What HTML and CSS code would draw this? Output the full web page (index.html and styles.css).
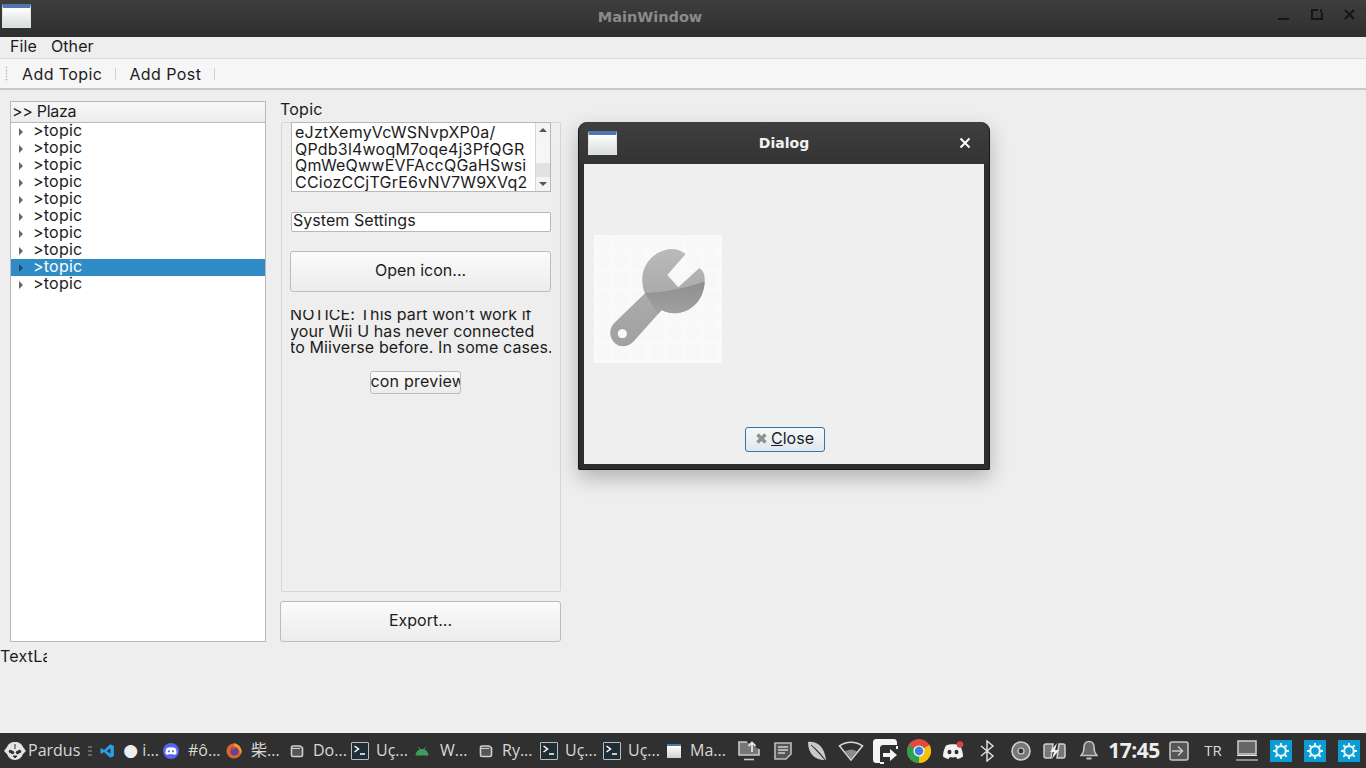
FILE: index.html
```html
<!DOCTYPE html>
<html>

<head>
  <title>MainWindow</title>
  <link rel="stylesheet" href="styles.css">
</head>

<body>
  <div class="main-window">
    <div class="titlebar">
      <span class="app-icon"></span>
      <span class="titlebar-text">MainWindow</span>
      <div class="window-buttons">
        <svg width="16" height="16" viewBox="0 0 16 16"><path d="M2 12h11" stroke="#161616" stroke-width="2"/></svg>
        <svg width="16" height="16" viewBox="0 0 16 16"><path d="M9 3H3v9h10V6M12 2.5v3" fill="none" stroke="#161616" stroke-width="2"/></svg>
        <svg width="16" height="16" viewBox="0 0 16 16"><path d="M3 3l9 9M12 3l-9 9" stroke="#161616" stroke-width="2.2"/></svg>
      </div>
    </div>

    <div class="menubar">
      <span>File</span>
      <span>Other</span>
    </div>

    <div class="toolbar">
      <span class="grip"></span>
      <span class="tool">Add Topic</span>
      <span class="tool-sep"></span>
      <span class="tool">Add Post</span>
      <span class="tool-sep"></span>
    </div>

    <div class="content">
      <div class="columns">
        <div class="tree">
          <div class="tree-header">&gt;&gt; Plaza</div>
          <div class="tree-body">
            <div class="tree-row"><span class="arrow"></span>&gt;topic</div>
            <div class="tree-row"><span class="arrow"></span>&gt;topic</div>
            <div class="tree-row"><span class="arrow"></span>&gt;topic</div>
            <div class="tree-row"><span class="arrow"></span>&gt;topic</div>
            <div class="tree-row"><span class="arrow"></span>&gt;topic</div>
            <div class="tree-row"><span class="arrow"></span>&gt;topic</div>
            <div class="tree-row"><span class="arrow"></span>&gt;topic</div>
            <div class="tree-row"><span class="arrow"></span>&gt;topic</div>
            <div class="tree-row selected"><span class="arrow"></span>&gt;topic</div>
            <div class="tree-row"><span class="arrow"></span>&gt;topic</div>
          </div>
        </div>

        <div class="topic-column">
          <div class="topic-label">Topic</div>
          <div class="group">
            <div class="text-area">
              <div class="text-lines">
                <div>eJztXemyVcWSNvpXP0a/</div>
                <div>QPdb3l4woqM7oqe4j3PfQGR</div>
                <div>QmWeQwwEVFAccQGaHSwsi</div>
                <div>CCiozCCjTGrE6vNV7W9XVq2</div>
              </div>
              <div class="scrollbar">
                <span class="scroll-btn"><span class="tri-up"></span></span>
                <span class="scroll-track"><span class="scroll-thumb"></span></span>
                <span class="scroll-btn"><span class="tri-down"></span></span>
              </div>
            </div>
            <div class="line-edit">System Settings</div>
            <div class="btn open-btn">Open icon...</div>
            <div class="notice">
              <p>NOTICE: This part won't work if your Wii U has never connected to Miiverse before. In some cases.</p>
            </div>
            <div class="btn preview-btn"><span>Icon preview</span></div>
          </div>
          <div class="btn export-btn">Export...</div>
        </div>
      </div>
      <div class="text-label">TextLabel</div>
    </div>
  </div>

  <!-- dialog window floating over the main one -->
  <div class="dialog">
    <div class="dialog-title">
      <span class="app-icon"></span>
      <span class="dialog-title-text">Dialog</span>
      <svg class="dialog-close" width="14" height="14" viewBox="0 0 14 14"><path d="M2.5 2.5l9 9M11.5 2.5l-9 9" stroke="#fff" stroke-width="2"/></svg>
    </div>
    <div class="dialog-body">
      <div class="preview-area">
        <svg class="wrench" width="128" height="128" viewBox="12 15 384 384">
          <defs>
            <pattern id="dots" width="54" height="54" patternUnits="userSpaceOnUse" x="12" y="15">
              <rect width="54" height="54" fill="#fafafa"/>
              <circle cx="27" cy="27" r="24" fill="#f8f8f8"/>
            </pattern>
            <linearGradient id="wrenchFill" x1="0" y1="0" x2="0" y2="1">
              <stop offset="0" stop-color="#bcbcbc"/>
              <stop offset="0.5" stop-color="#aaaaaa"/>
              <stop offset="1" stop-color="#a0a0a0"/>
            </linearGradient>
            <linearGradient id="wrenchLow" x1="0" y1="0" x2="0" y2="1">
              <stop offset="0" stop-color="#8e8e8e"/>
              <stop offset="1" stop-color="#a4a4a4"/>
            </linearGradient>
            <clipPath id="wrenchClip">
              <path d="M287 72C270 58 250 55 235 58C190 65 155 105 157 150C157 165 160 180 165 190L72 280C55 298 58 325 75 340C90 355 115 350 130 335L215 240C235 250 255 252 275 247C320 235 350 190 343 135C340 125 335 118 328 114L265 172L232 135Z"/>
            </clipPath>
          </defs>
          <rect x="12" y="15" width="384" height="384" fill="url(#dots)"/>
          <g clip-path="url(#wrenchClip)">
            <rect x="40" y="40" width="320" height="320" fill="url(#wrenchFill)"/>
            <path d="M165 190C230 185 290 175 350 152V270H215Z" fill="url(#wrenchLow)"/>
          </g>
          <circle cx="97" cy="311" r="15" fill="#f8f8f8" stroke="#8c8c8c" stroke-width="2"/>
        </svg>
      </div>
      <div class="dialog-actions">
        <div class="close-btn">
          <svg width="13" height="13" viewBox="0 0 13 13"><path d="M2.5 2.5l8 8M10.5 2.5l-8 8" stroke="#8f938f" stroke-width="3.4"/></svg>
          <span><u>C</u>lose</span>
        </div>
      </div>
    </div>
  </div>

  <div class="taskbar">
    <div class="start">
      <svg width="22" height="20" viewBox="0 0 22 20"><path d="M11 1C7 1 4 3 3 6L0 10l3 3c1 3 4 6 8 6s7-3 8-6l3-3-3-4c-1-3-4-5-8-5z" fill="#e4e4e4"/><path d="M6 9l4 2-1 2-4-2zM16 9l-4 2 1 2 4-2zM9 15h4l-2 2zM11 3v5" stroke="#303030" stroke-width="1" fill="#303030"/></svg>
      <span>Pardus</span>
    </div>
    <span class="handle"></span>

    <div class="task task-first">
      <svg width="16" height="16" viewBox="0 0 16 16"><path d="M11.5 0.5L15.5 2.3V13.7L11.5 15.5L4.5 9L1.7 11.2L0.5 10.5V5.5L1.7 4.8L4.5 7ZM11.5 4.8L7.5 8L11.5 11.2Z" fill="#2a9fe6"/></svg>
      <span class="task-label"><span class="dot">●</span> i...</span>
    </div>
    <div class="task">
      <svg width="16" height="16" viewBox="0 0 16 16"><circle cx="8" cy="8" r="8" fill="#5865f2"/><path d="M3.5 5.2C6 3.8 10 3.8 12.5 5.2C13.4 7 13.7 8.8 13.5 10.8C12.6 11.5 11.7 11.8 10.9 12L10.2 10.9C8.8 11.3 7.2 11.3 5.8 10.9L5.1 12C4.3 11.8 3.4 11.5 2.5 10.8C2.3 8.8 2.6 7 3.5 5.2Z" fill="#fff"/><circle cx="6" cy="8.3" r="1.1" fill="#5865f2"/><circle cx="10" cy="8.3" r="1.1" fill="#5865f2"/></svg>
      <span class="task-label">#ô...</span>
    </div>
    <div class="task">
      <svg width="16" height="17" viewBox="0 0 16 17"><circle cx="8" cy="9" r="7.6" fill="#d9662c"/><path d="M8 1c3 1 6 3 7 6 1 2 .5 4-.2 5.5C14 8 12 5 8 4z" fill="#e9a02f"/><circle cx="8.5" cy="9.5" r="4" fill="#6a3e9e"/><path d="M4 6c2-2 5-2 7 0-2 0-3 .5-4 2z" fill="#c9502c"/></svg>
      <span class="task-label cjk">柴...</span>
    </div>
    <div class="task">
      <svg class="task-win" width="14" height="14" viewBox="0 0 14 14"><path d="M1.5 3.5C1.5 2.5 2 2 3 2h7l2.5 2v7c0 1-.5 1.5-1.5 1.5H3c-1 0-1.5-.5-1.5-1.5z" fill="#555" stroke="#cfcfcf" stroke-width="1.6"/><path d="M2 4.5h8" stroke="#cfcfcf" stroke-width="1"/></svg>
      <span class="task-label">Do...</span>
    </div>
    <div class="task">
      <span class="term"><svg width="16" height="15" viewBox="0 0 16 15"><path d="M2.5 3l4 3-4 3" fill="none" stroke="#fff" stroke-width="1.5"/><path d="M8 11h5" stroke="#fff" stroke-width="1.5"/></svg></span>
      <span class="task-label">Uç...</span>
    </div>
    <div class="task">
      <svg class="android" width="14" height="10" viewBox="0 0 14 10"><path d="M0.5 9.5C0.8 5.5 3.5 3 7 3s6.2 2.5 6.5 6.5z" fill="#3f9c5a"/><path d="M3.5 1l1.5 2.5M10.5 1L9 3.5" stroke="#3f9c5a"/></svg>
      <span class="task-label">W...</span>
    </div>
    <div class="task">
      <svg class="task-win" width="14" height="14" viewBox="0 0 14 14"><path d="M1.5 3.5C1.5 2.5 2 2 3 2h7l2.5 2v7c0 1-.5 1.5-1.5 1.5H3c-1 0-1.5-.5-1.5-1.5z" fill="#555" stroke="#cfcfcf" stroke-width="1.6"/><path d="M2 4.5h8" stroke="#cfcfcf" stroke-width="1"/></svg>
      <span class="task-label">Ry...</span>
    </div>
    <div class="task">
      <span class="term"><svg width="16" height="15" viewBox="0 0 16 15"><path d="M2.5 3l4 3-4 3" fill="none" stroke="#fff" stroke-width="1.5"/><path d="M8 11h5" stroke="#fff" stroke-width="1.5"/></svg></span>
      <span class="task-label">Uç...</span>
    </div>
    <div class="task">
      <span class="term"><svg width="16" height="15" viewBox="0 0 16 15"><path d="M2.5 3l4 3-4 3" fill="none" stroke="#fff" stroke-width="1.5"/><path d="M8 11h5" stroke="#fff" stroke-width="1.5"/></svg></span>
      <span class="task-label">Uç...</span>
    </div>
    <div class="task">
      <span class="task-app"></span>
      <span class="task-label">Ma...</span>
    </div>

    <div class="tray">
      <span class="tray-cell"><svg width="24" height="22" viewBox="0 0 24 22"><path d="M10 2H2v13h20V9" fill="#777" stroke="#c9c9c9" stroke-width="1.6"/><path d="M15 12V3M11.5 6L15 2.5 18.500 6" fill="none" stroke="#e4e4e4" stroke-width="1.8"/><path d="M7 19.500h10" stroke="#c9c9c9" stroke-width="1.6"/></svg></span>
      <span class="tray-cell"><svg width="20" height="20" viewBox="0 0 20 20"><path d="M2 2h16v11l-5 5H2z" fill="#555" stroke="#bcbcbc" stroke-width="1.6"/><path d="M5 6h10M5 9h10M5 12h7" stroke="#d0d0d0" stroke-width="1.4"/></svg></span>
      <span class="tray-cell"><svg width="22" height="22" viewBox="0 0 22 22"><path d="M2 2C10 1 18 5 20 20 12 21 2 16 2 2z" fill="#c9c9c9"/><path d="M5 5C10 9 15 14 19 20" stroke="#333" stroke-width="1"/></svg></span>
      <span class="tray-cell"><svg width="26" height="22" viewBox="0 0 26 22"><path d="M1.500 6C8 1 18 1 24.500 6L13 20z" fill="none" stroke="#d8d8d8" stroke-width="1.6"/><path d="M7 11.500C10.500 9 15.500 9 19 11.500L13 19z" fill="#8c8c8c"/></svg></span>
      <span class="tray-cell"><svg width="26" height="26" viewBox="0 0 26 26"><path d="M13 1H5C2 1 1 2 1 5v16c0 3 1 4 4 4h3V11c0-3 1-4 4-4h13V5c0-3-1-4-4-4z" fill="#f4f4f4"/><path d="M11 15h7v-4l7 6-7 6v-4h-7z" fill="#f4f4f4"/><path d="M8 25h4M25 8v3" stroke="#f4f4f4" stroke-width="2"/></svg></span>
      <span class="tray-cell"><svg width="24" height="24" viewBox="0 0 24 24"><circle cx="12" cy="12" r="12" fill="#dd4c3c"/><path d="M12 12L22.400 6A12 12 0 0 1 12 24z" fill="#f4c20d"/><path d="M12 12L12 24A12 12 0 0 1 1.600 6z" fill="#2e9e4f"/><circle cx="12" cy="12" r="5.600" fill="#fff"/><circle cx="12" cy="12" r="4.400" fill="#3b7fe6"/></svg></span>
      <span class="tray-cell"><svg width="24" height="20" viewBox="0 0 24 20"><path d="M5 4.500C9 2.800 15 2.800 19 4.500C21 8 22 12 22 15.500C20 17 18 18 16.500 18L15 16C13 16.600 11 16.600 9 16L7.500 18C6 18 4 17 2 15.500C2 12 3 8 5 4.500Z" fill="#f2f2f2"/><ellipse cx="8.500" cy="11" rx="2" ry="2.300" fill="#303030"/><ellipse cx="15.500" cy="11" rx="2" ry="2.300" fill="#303030"/><circle cx="19" cy="3.500" r="3.300" fill="#e0414a"/></svg></span>
      <span class="tray-cell"><svg width="16" height="22" viewBox="0 0 16 22"><path d="M2 6l12 10-6 5V1l6 5L2 16" fill="none" stroke="#dcdcdc" stroke-width="1.500"/></svg></span>
      <span class="tray-cell"><svg width="20" height="20" viewBox="0 0 20 20"><circle cx="10" cy="10" r="9" fill="#777" stroke="#d0d0d0" stroke-width="1.600"/><circle cx="10" cy="10" r="3" fill="#333" stroke="#d0d0d0" stroke-width="1.200"/></svg></span>
      <span class="tray-cell"><svg width="24" height="16" viewBox="0 0 24 16"><path d="M10 1H3C1.800 1 1 1.800 1 3v10c0 1.200.8 2 2 2h5zM14 15h6c1.200 0 2-.8 2-2V3c0-1.200-.8-2-2-2h-4z" fill="#777" stroke="#d0d0d0" stroke-width="1.500"/><path d="M14 0L7 9h4l-2 7 7-9h-4z" fill="#f0f0f0"/></svg></span>
      <span class="tray-cell"><svg width="18" height="21" viewBox="0 0 18 21"><path d="M9 1.500c3.500 0 5 3 5 6 0 4 1 6 3 8H1c2-2 3-4 3-8 0-3 1.500-6 5-6z" fill="#666" stroke="#c4c4c4" stroke-width="1.500"/><path d="M6.500 18.500h5" stroke="#c4c4c4" stroke-width="2"/></svg></span>
      <span class="clock">17:45</span>
      <span class="tray-cell"><svg width="20" height="20" viewBox="0 0 20 20"><rect x="1" y="1" width="18" height="18" rx="2" fill="#555" stroke="#c8c8c8" stroke-width="1.500"/><path d="M3 10h10M9 5.500l4.500 4.500-4.500 4.500" fill="none" stroke="#c8c8c8" stroke-width="1.500"/></svg></span>
      <span class="tray-cell tray-lang">TR</span>
      <span class="tray-cell tray-desk"><svg width="22" height="21" viewBox="0 0 22 21"><rect x="2" y="1" width="18" height="13" fill="#666" stroke="#d0d0d0" stroke-width="1.500"/><path d="M1 15.500h20M0 20h22" stroke="#e8e8e8" stroke-width="1.200"/></svg></span>
      <span class="tray-cell"><span class="gear"><svg width="16" height="16" viewBox="0 0 16 16"><circle cx="8" cy="8" r="4.800" fill="none" stroke="#dff3fb" stroke-width="2.200"/><path d="M8 0v3M8 13v3M0 8h3M13 8h3M2.300 2.300l2 2M11.700 11.700l2 2M13.700 2.300l-2 2M4.300 11.700l-2 2" stroke="#dff3fb" stroke-width="2"/></svg></span></span>
      <span class="tray-cell"><span class="gear"><svg width="16" height="16" viewBox="0 0 16 16"><circle cx="8" cy="8" r="4.800" fill="none" stroke="#dff3fb" stroke-width="2.200"/><path d="M8 0v3M8 13v3M0 8h3M13 8h3M2.300 2.300l2 2M11.700 11.700l2 2M13.700 2.300l-2 2M4.300 11.700l-2 2" stroke="#dff3fb" stroke-width="2"/></svg></span></span>
      <span class="tray-cell"><span class="gear"><svg width="16" height="16" viewBox="0 0 16 16"><circle cx="8" cy="8" r="4.800" fill="none" stroke="#dff3fb" stroke-width="2.200"/><path d="M8 0v3M8 13v3M0 8h3M13 8h3M2.300 2.300l2 2M11.700 11.700l2 2M13.700 2.300l-2 2M4.300 11.700l-2 2" stroke="#dff3fb" stroke-width="2"/></svg></span></span>
    </div>
  </div>
</body>

</html>
```

FILE: styles.css
```css
:root {
  --window-bg: #eeeeee;
  --line: #b8b8b8;
  --text: #1c1c1c;
  --selected: #308cc6;
  --bar: #303030;
}

html,
body {
  margin: 0;
  padding: 0;
  height: 768px;
  overflow: hidden;
}

body {
  display: flex;
  flex-direction: column;
  background-color: var(--window-bg);
  color: var(--text);
  font-family: Inter, "Liberation Sans", sans-serif;
  font-size: 16px;
  letter-spacing: 0.22px;
  line-height: 17px;
}

.main-window {
  flex: 1;
  min-height: 0;
  display: flex;
  flex-direction: column;
}

/* Title bar */
.titlebar {
  box-sizing: border-box;
  height: 37px;
  position: relative;
  display: flex;
  align-items: center;
  justify-content: center;
  padding: 0 66px 3px 0;
  background-image: linear-gradient(#3e3e3e, #2f2f2f);
}

.titlebar .app-icon {
  position: absolute;
  left: 2px;
  top: 4px;
}

.titlebar-text {
  font-family: "DejaVu Sans", sans-serif;
  font-weight: bold;
  font-size: 14.5px;
  letter-spacing: 0;
  color: #8a8a8a;
}

.window-buttons {
  position: absolute;
  right: 8px;
  top: 7px;
  display: flex;
  gap: 17px;
}

.app-icon {
  box-sizing: border-box;
  display: block;
  width: 29px;
  height: 24px;
  border: 1px solid #dfe3e3;
  border-top: 4px solid #4f76ad;
  box-shadow: inset 0 1px 0 #ffffff;
  background-image: linear-gradient(#ffffff, #d9ddd8);
}

/* Menu and tool bar */
.menubar {
  box-sizing: border-box;
  height: 21px;
  display: flex;
  align-items: center;
  gap: 14px;
  padding: 0 0 3px 10px;
  letter-spacing: 0.1px;
}

.toolbar {
  box-sizing: border-box;
  height: 32px;
  display: flex;
  align-items: center;
  padding: 1px 0 0 5px;
  background-color: #f6f6f6;
  border-top: 1px solid #dcdcdc;
  border-bottom: 2px solid #c8c8c8;
}

.tool {
  letter-spacing: 0.42px;
}

.grip {
  width: 3px;
  height: 16px;
  margin-right: 14px;
  background-image: radial-gradient(#b5b5b5 40%, transparent 50%);
  background-size: 3px 3px;
}

.tool-sep {
  width: 1px;
  height: 12px;
  margin: 0 13px;
  background-color: #d2d2d2;
}

/* Main content */
.content {
  flex: 1;
  padding-top: 11px;
}

.columns {
  display: flex;
  gap: 14px;
  height: 541px;
  padding-left: 10px;
}

.tree {
  box-sizing: border-box;
  width: 256px;
  display: flex;
  flex-direction: column;
  border: 1px solid var(--line);
  background-color: #ffffff;
}

.tree-header {
  height: 20px;
  padding-left: 1px;
  line-height: 19px;
  letter-spacing: -0.3px;
  background-image: linear-gradient(#f8f8f8, #ececec);
  border-bottom: 1px solid var(--line);
}

.tree-body {
  flex: 1;
}

.tree-row {
  box-sizing: border-box;
  height: 17px;
  display: flex;
  align-items: center;
  padding: 0 0 2px 8px;
}

.tree-row.selected {
  background-color: var(--selected);
  color: #ffffff;
}

.arrow {
  width: 0;
  height: 0;
  margin: 2px 10px 0 0;
  border-left: 4px solid #666666;
  border-top: 4px solid transparent;
  border-bottom: 4px solid transparent;
}

.selected .arrow {
  border-left-color: #1c4a68;
}

.topic-column {
  width: 281px;
  display: flex;
  flex-direction: column;
}

.topic-label {
  height: 21px;
}

.group {
  box-sizing: border-box;
  height: 470px;
  margin-left: 1px;
  padding: 0 9px;
  border: 1px solid #d6d6d6;
  border-radius: 2px;
}

.text-area {
  box-sizing: border-box;
  height: 70px;
  margin-top: -1px;
  display: flex;
  border: 1px solid var(--line);
  background-color: #ffffff;
}

.text-lines {
  flex: 1;
  padding: 1px 0 0 3px;
  line-height: 16.5px;
  overflow: hidden;
  white-space: nowrap;
}

.scrollbar {
  width: 14px;
  display: flex;
  flex-direction: column;
  border-left: 1px solid #d8d8d8;
}

.scroll-btn {
  height: 14px;
  display: flex;
  align-items: center;
  justify-content: center;
  background-color: #f4f4f4;
}

.scroll-track {
  flex: 1;
  display: flex;
  flex-direction: column;
  justify-content: flex-end;
  background-color: #f6f6f6;
}

.scroll-thumb {
  height: 14px;
  background-color: #e2e2e2;
}

.tri-up,
.tri-down {
  width: 0;
  height: 0;
  border-left: 4px solid transparent;
  border-right: 4px solid transparent;
}

.tri-up {
  border-bottom: 4px solid #555555;
}

.tri-down {
  border-top: 4px solid #555555;
}

.line-edit {
  box-sizing: border-box;
  height: 20px;
  margin-top: 20px;
  padding-left: 1px;
  line-height: 15px;
  letter-spacing: 0.05px;
  background-color: #ffffff;
  border: 1px solid var(--line);
  border-radius: 2px;
}

.btn {
  box-sizing: border-box;
  display: flex;
  align-items: center;
  justify-content: center;
  padding-bottom: 2px;
  letter-spacing: 0;
  background-image: linear-gradient(#fbfbfb, #ececec);
  border: 1px solid #bcbcbc;
  border-radius: 3px;
  white-space: nowrap;
  overflow: hidden;
}

.open-btn {
  width: 261px;
  height: 41px;
  margin: 19px 0 0 -1px;
}

.notice {
  height: 44px;
  margin-top: 18px;
  overflow: hidden;
  line-height: 16.5px;
  letter-spacing: 0.1px;
}

.notice p {
  margin: -4px -2px 0 -1px;
}

.preview-btn {
  width: 91px;
  height: 23px;
  margin: 17px 0 0 79px;
}

.preview-btn span {
  flex-shrink: 0;
  letter-spacing: 0.22px;
}

.export-btn {
  height: 41px;
  margin-top: 9px;
}

.text-label {
  width: 47px;
  margin-top: 6px;
  overflow: hidden;
  white-space: nowrap;
}

/* Dialog window */
.dialog {
  box-sizing: border-box;
  position: absolute;
  left: 578px;
  top: 122px;
  width: 412px;
  height: 348px;
  display: flex;
  flex-direction: column;
  border: 1px solid #161616;
  border-top: none;
  border-radius: 9px 9px 2px 2px;
  background-color: #2e2e2e;
  box-shadow: 0 8px 20px rgba(0, 0, 0, 0.25);
}

.dialog-title {
  height: 42px;
  position: relative;
  display: flex;
  align-items: center;
  justify-content: center;
  border-radius: 9px 9px 0 0;
  background-image: linear-gradient(#3f3f3f, #333333);
}

.dialog-title .app-icon {
  position: absolute;
  left: 9px;
  top: 9px;
}

.dialog-title-text {
  font-family: "DejaVu Sans", sans-serif;
  font-weight: bold;
  font-size: 14px;
  letter-spacing: 0;
  color: #f2f2f2;
}

.dialog-close {
  position: absolute;
  right: 17px;
  top: 14px;
}

.dialog-body {
  flex: 1;
  margin: 0 5px 5px;
  display: flex;
  flex-direction: column;
  background-color: #efefef;
}

.preview-area {
  flex: 1;
  padding: 71px 0 0 10px;
}

.wrench {
  display: block;
}

.dialog-actions {
  display: flex;
  justify-content: center;
  padding: 0 0 12px 1px;
}

.close-btn {
  box-sizing: border-box;
  width: 80px;
  height: 25px;
  display: flex;
  align-items: center;
  justify-content: center;
  gap: 3px;
  padding-bottom: 2px;
  letter-spacing: 0;
  border: 1px solid #2c77a8;
  border-radius: 3px;
  background-image: linear-gradient(#f6f8f9, #dfe8ee);
}

/* Task bar */
.taskbar {
  height: 35px;
  display: flex;
  align-items: center;
  background-color: var(--bar);
  color: #d9d9d9;
  font-family: "Open Sans", sans-serif;
  font-size: 16px;
  letter-spacing: 0;
}

.start {
  box-sizing: border-box;
  display: flex;
  align-items: center;
  gap: 2px;
  padding-left: 4px;
  width: 84px;
  flex-shrink: 0;
}

.handle {
  width: 4px;
  height: 10px;
  margin-left: 4px;
  background-image: linear-gradient(#666666 40%, transparent 40%);
  background-size: 4px 4px;
  flex-shrink: 0;
}

.task {
  box-sizing: border-box;
  width: 63px;
  height: 35px;
  padding-left: 4px;
  display: flex;
  align-items: center;
  gap: 9px;
  flex-shrink: 0;
  white-space: nowrap;
}

.task-first {
  margin-left: 4px;
}

.dot {
  font-family: "DejaVu Sans", sans-serif;
  font-size: 17px;
  color: #eeeeee;
}

.cjk {
  font-family: "Open Sans", "Noto Sans CJK SC", sans-serif;
}

.task-win {
  margin-left: 1px;
}

.android {
  margin-right: 2px;
}

.term {
  box-sizing: border-box;
  width: 18px;
  height: 18px;
  margin: 0 -2px 0 -1px;
  display: flex;
  align-items: center;
  justify-content: center;
  background-color: #1f2d36;
  border: 1px solid #b6bec2;
  border-radius: 1px;
}

.task-app {
  box-sizing: border-box;
  width: 14px;
  height: 14px;
  border-top: 2px solid #4f76ad;
  background-image: linear-gradient(#ffffff, #cfcfcb);
}

.tray {
  position: absolute;
  right: 0;
  bottom: 0;
  height: 35px;
  display: flex;
  align-items: center;
}

.tray-cell {
  width: 34px;
  display: flex;
  align-items: center;
  justify-content: center;
  flex-shrink: 0;
}

.tray-lang {
  font-size: 15px;
}

.clock {
  width: 56px;
  text-align: center;
  font-weight: bold;
  font-size: 21px;
  letter-spacing: -0.5px;
  color: #ededed;
}

.gear {
  width: 22px;
  height: 22px;
  display: flex;
  align-items: center;
  justify-content: center;
  background-color: #0d9bd3;
}
```
